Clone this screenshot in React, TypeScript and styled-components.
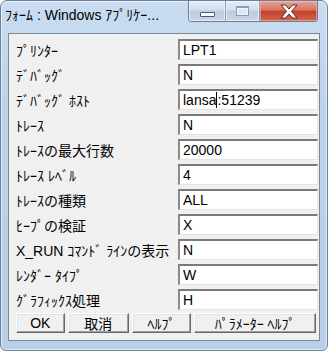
import styled, { createGlobalStyle } from "styled-components";

const GlobalStyle = createGlobalStyle`
  html, body {
    margin: 0;
    padding: 0;
    background: #ffffff;
  }
  body {
    font-family: "Liberation Sans", "Noto Sans CJK JP", sans-serif;
  }
`;

const rows: { label: string; value: string; caretAt?: number }[] = [
  { label: "ﾌﾟﾘﾝﾀｰ", value: "LPT1" },
  { label: "ﾃﾞﾊﾞｯｸﾞ", value: "N" },
  { label: "ﾃﾞﾊﾞｯｸﾞ ﾎｽﾄ", value: "lansa:51239", caretAt: 5 },
  { label: "ﾄﾚｰｽ", value: "N" },
  { label: "ﾄﾚｰｽの最大行数", value: "20000" },
  { label: "ﾄﾚｰｽ ﾚﾍﾞﾙ", value: "4" },
  { label: "ﾄﾚｰｽの種類", value: "ALL" },
  { label: "ﾋｰﾌﾟの検証", value: "X" },
  { label: "X_RUN ｺﾏﾝﾄﾞ ﾗｲﾝの表示", value: "N" },
  { label: "ﾚﾝﾀﾞｰ ﾀｲﾌﾟ", value: "W" },
  { label: "ｸﾞﾗﾌｨｯｸｽ処理", value: "H" },
];

function App() {
  return (
    <>
      <GlobalStyle />
      <Window>
        <TitleBar>
          <Title>ﾌｫｰﾑ : Windows ｱﾌﾟﾘｹｰ...</Title>
          <Controls>
            <CtrlButton $w={36}>
              <MinGlyph />
            </CtrlButton>
            <CtrlButton $w={33}>
              <MaxGlyph />
            </CtrlButton>
            <CloseButton>
              <svg width="20" height="15" viewBox="0 0 20 15">
                <path
                  d="M2 1h4.5l3.5 4 3.5-4H18l-5.5 6.5L18 14h-4.5L10 10l-3.5 4H2l5.5-6.5z"
                  fill="#ffffff"
                  stroke="#5a2a24"
                  strokeWidth="1"
                  strokeLinejoin="round"
                />
              </svg>
            </CloseButton>
          </Controls>
        </TitleBar>
        <Client>
          <Form>
            {rows.map((r) => (
              <Row key={r.label}>
                <Label>{r.label}</Label>
                <Field>
                  {r.caretAt !== undefined ? (
                    <>
                      {r.value.slice(0, r.caretAt)}
                      <Caret />
                      {r.value.slice(r.caretAt)}
                    </>
                  ) : (
                    r.value
                  )}
                </Field>
              </Row>
            ))}
          </Form>
          <ButtonBar>
            <PushButton $w={49}>OK</PushButton>
            <PushButton $w={62}>取消</PushButton>
            <PushButton $w={60}>ﾍﾙﾌﾟ</PushButton>
            <PushButton $w={123}>ﾊﾟﾗﾒｰﾀｰ ﾍﾙﾌﾟ</PushButton>
          </ButtonBar>
        </Client>
      </Window>
    </>
  );
}

export default App;

const Window = styled.div`
  box-sizing: border-box;
  width: 328px;
  height: 351px;
  display: flex;
  flex-direction: column;
  border: 1px solid #6b7f98;
  border-radius: 7px 7px 6px 6px;
  background: linear-gradient(180deg, #c9dcf1 0%, #bcd3ec 30%, #b7cfe9 100%);
  box-shadow: inset 0 0 0 1px rgba(255, 255, 255, 0.6);
`;

const TitleBar = styled.div`
  height: 32px;
  flex-shrink: 0;
  display: flex;
  align-items: flex-start;
  justify-content: space-between;
  padding: 0 9px 0 4px;
`;

const Title = styled.div`
  font-size: 14px;
  line-height: 14px;
  margin-top: 7px;
  color: #000;
  white-space: nowrap;
`;

const Controls = styled.div`
  display: flex;
  height: 20px;
  border: 1px solid #6a7d95;
  border-top: none;
  border-radius: 0 0 4px 4px;
  overflow: hidden;
`;

const CtrlButton = styled.div<{ $w: number }>`
  width: ${(p) => p.$w}px;
  display: flex;
  align-items: center;
  justify-content: center;
  background: linear-gradient(180deg, #e4ecf6 0%, #d3dfee 45%, #bccbdf 50%, #c9d7e8 100%);
  border-right: 1px solid #8a9bb0;
  box-shadow: inset 0 0 0 1px rgba(255, 255, 255, 0.55);
`;

const MinGlyph = styled.div`
  width: 13px;
  height: 3px;
  margin-top: 6px;
  background: #ffffff;
  border: 1px solid #4b5c72;
  border-radius: 1px;
`;

const MaxGlyph = styled.div`
  width: 11px;
  height: 7px;
  border: 1px solid #8d9db1;
  border-top-width: 2px;
  background: #dfe7f1;
  box-shadow: inset 0 0 0 1px #f2f6fb;
`;

const CloseButton = styled.div`
  width: 57px;
  display: flex;
  align-items: center;
  justify-content: center;
  background: linear-gradient(180deg, #e6a595 0%, #d77560 45%, #c2412a 52%, #d2654b 100%);
  box-shadow: inset 0 0 0 1px rgba(255, 210, 200, 0.5);
`;

const Client = styled.div`
  flex: 1;
  margin: 0 7px 9px 7px;
  display: flex;
  flex-direction: column;
  gap: 3px;
  padding: 5px 3px 7px 7px;
  background: #f0f0f0;
  border: 1px solid #7d8896;
`;

const Form = styled.div`
  display: flex;
  flex-direction: column;
  gap: 4px;
`;

const Row = styled.div`
  display: grid;
  grid-template-columns: 162px 140px;
  height: 21px;
  align-items: center;
`;

const Label = styled.div`
  font-size: 14px;
  color: #000;
  white-space: nowrap;
  overflow: hidden;
`;

const Field = styled.div`
  box-sizing: border-box;
  height: 21px;
  display: flex;
  align-items: center;
  padding-left: 3px;
  font-size: 14px;
  color: #000;
  background: #ffffff;
  border-style: solid;
  border-width: 2px 1px 1px 2px;
  border-color: #7a7a7a #e3e3e3 #e3e3e3 #8a8a8a;
`;

const Caret = styled.span`
  display: inline-block;
  width: 1px;
  height: 16px;
  background: #000;
`;

const ButtonBar = styled.div`
  display: flex;
  gap: 3px;
`;

const PushButton = styled.div<{ $w: number }>`
  box-sizing: border-box;
  width: ${(p) => p.$w}px;
  height: 20px;
  display: flex;
  align-items: center;
  justify-content: center;
  font-size: 14px;
  color: #000;
  background: #f0f0f0;
  border-style: solid;
  border-width: 1px;
  border-color: #ffffff #696969 #696969 #ffffff;
  box-shadow: inset -1px -1px 0 #a0a0a0, inset 1px 1px 0 #e3e3e3;
`;
